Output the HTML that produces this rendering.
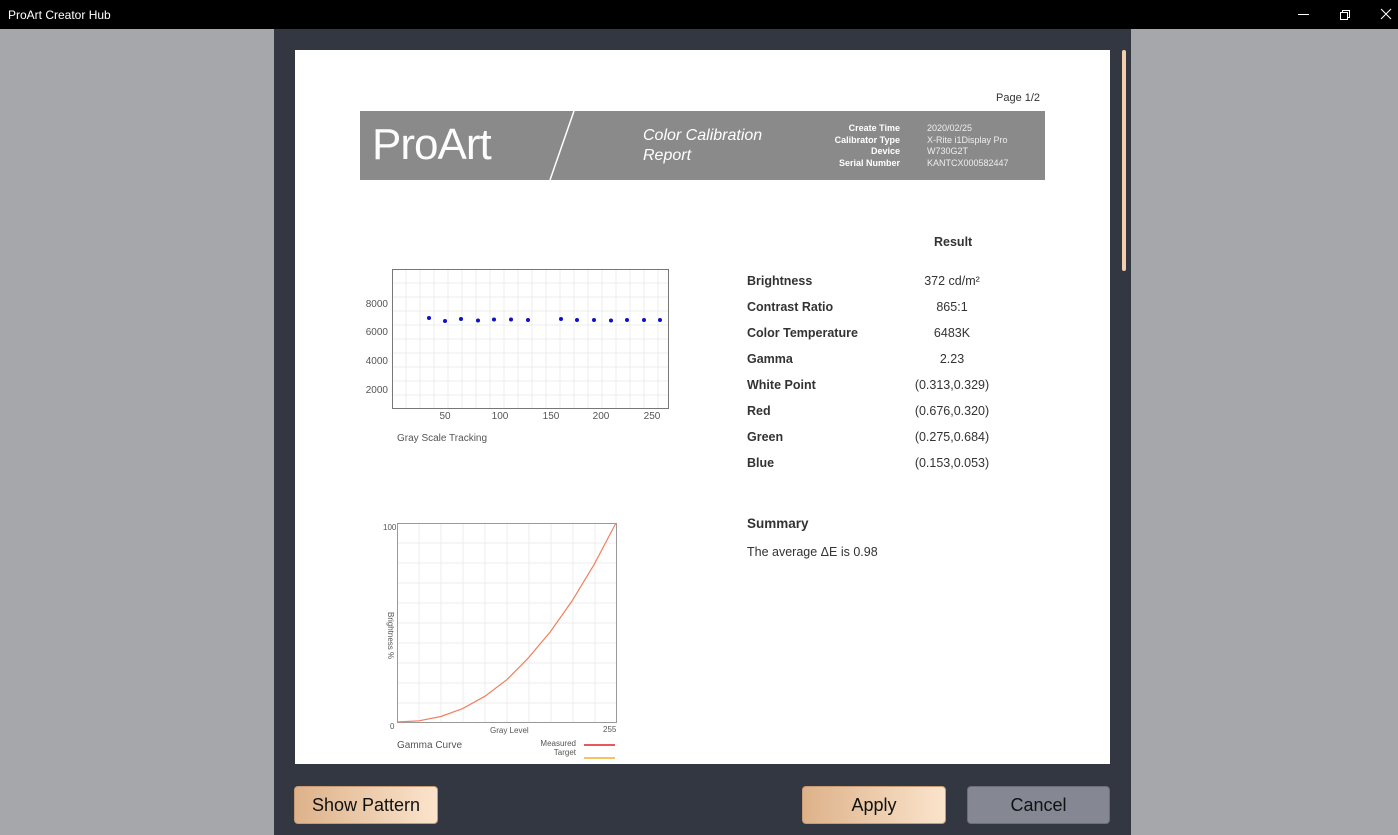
<!DOCTYPE html>
<html><head><meta charset="utf-8"><style>
*{margin:0;padding:0;box-sizing:border-box}
body{width:1398px;height:835px;overflow:hidden;background:#a6a7ab;font-family:"Liberation Sans",sans-serif;position:relative}
.abs{position:absolute}
.title{left:0;top:0;width:1398px;height:29px;background:#000;color:#fff;font-size:12px}
.panel{left:274px;top:29px;width:857px;height:806px;background:#323741}
.page{left:295px;top:50px;width:815px;height:714px;background:#fff;overflow:hidden}
.btn{height:38px;border-radius:4px;font-size:18px;color:#111;display:flex;align-items:center;justify-content:center}
.peach{background:linear-gradient(90deg,#ddb28a,#fbe4cc);border:1px solid #c99b72}
.lbl{font-size:12.5px;font-weight:bold;color:#333}
.val{font-size:12.5px;color:#333;text-align:center;width:140px}
</style></head><body>
<div class="abs title"><span class="abs" style="left:8px;top:8px">ProArt Creator Hub</span>
<svg class="abs" style="left:1290px;top:6px" width="108" height="18"><line x1="8" y1="8.5" x2="19" y2="8.5" stroke="#fff"/><rect x="50.5" y="6.5" width="7" height="7" fill="none" stroke="#fff"/><path d="M52.5 6.5V4.5H59.5V11.5H57.5" fill="none" stroke="#fff"/><path d="M91 3L101 13M101 3L91 13" stroke="#fff"/></svg></div>
<div class="abs panel"></div>
<div class="abs" style="left:1122px;top:50px;width:4px;height:221px;background:#f3cfae;border-radius:2px"></div>
<div class="abs page"></div>
<div class="abs" style="left:996px;top:92px;font-size:11px;color:#333">Page 1/2</div>
<div class="abs" style="left:360px;top:111px;width:685px;height:69px;background:#8a8a8a;color:#fff;overflow:hidden">
<svg class="abs" style="left:0;top:0" width="685" height="69"><line x1="214" y1="0" x2="190" y2="69" stroke="#fff" stroke-width="1.5"/></svg>
<div class="abs" style="left:12px;top:9px;font-size:44px;letter-spacing:-1px;font-weight:300;color:#fdfdfd">ProArt</div>
<div class="abs" style="left:283px;top:15px;font-size:16px;font-style:italic;line-height:20px">Color Calibration<br>Report</div>
<div class="abs" style="left:440px;top:12px;width:100px;text-align:right;font-size:9px;font-weight:bold;line-height:11.5px">Create Time<br>Calibrator Type<br>Device<br>Serial Number</div>
<div class="abs" style="left:567px;top:12px;font-size:9px;line-height:11.5px;color:#eee">2020/02/25<br>X-Rite i1Display Pro<br>W730G2T<br>KANTCX000582447</div>
</div>
<svg class="abs" style="left:0;top:0" width="1110" height="764" font-family="Liberation Sans" fill="#555">
<g stroke="#ececec" stroke-width="1">
<path d="M406 269V408M420 269V408M434 269V408M448 269V408M462 269V408M476 269V408M490 269V408M504 269V408M518 269V408M532 269V408M546 269V408M560 269V408M574 269V408M588 269V408M602 269V408M616 269V408M630 269V408M644 269V408M658 269V408"/>
<path d="M392 283H668M392 297H668M392 311H668M392 325H668M392 339H668M392 353H668M392 367H668M392 381H668M392 395H668"/>
<path d="M419 523V722M441 523V722M463 523V722M485 523V722M507 523V722M529 523V722M551 523V722M573 523V722M595 523V722"/>
<path d="M397 543H616M397 563H616M397 583H616M397 603H616M397 623H616M397 643H616M397 663H616M397 683H616M397 703H616"/>
</g>
<rect x="392.5" y="269.5" width="276" height="139" fill="none" stroke="#777"/>
<rect x="397.5" y="523.5" width="219" height="199" fill="none" stroke="#999"/>
<g fill="#1010c8"><circle cx="429" cy="318" r="2"/><circle cx="445" cy="321" r="2"/><circle cx="461" cy="319" r="2"/><circle cx="478" cy="320.5" r="2"/><circle cx="494" cy="319.5" r="2"/><circle cx="511" cy="319.5" r="2"/><circle cx="528" cy="320" r="2"/><circle cx="561" cy="319" r="2"/><circle cx="577" cy="320" r="2"/><circle cx="594" cy="320" r="2"/><circle cx="611" cy="320.5" r="2"/><circle cx="627" cy="320" r="2"/><circle cx="644" cy="320" r="2"/><circle cx="660" cy="320" r="2"/></g>
<g font-size="10" text-anchor="end"><text x="388" y="307">8000</text><text x="388" y="335">6000</text><text x="388" y="364">4000</text><text x="388" y="393">2000</text></g>
<g font-size="10" text-anchor="middle"><text x="445" y="419">50</text><text x="500" y="419">100</text><text x="551" y="419">150</text><text x="601" y="419">200</text><text x="652" y="419">250</text></g>
<text x="397" y="441" font-size="10">Gray Scale Tracking</text>
<path d="M397 722L419 720.8L441 716.5L463 708.4L485 696.2L507 679.6L528 658.3L550 632.2L572 601L594 564.7L616 523" fill="none" stroke="#f08060" stroke-width="1.2"/>
<g font-size="8"><text x="383" y="530">100</text><text x="390" y="729">0</text><text x="490" y="733">Gray Level</text><text x="603" y="732">255</text>
<text x="0" y="0" transform="translate(388,612) rotate(90)">Brightness %</text>
<text x="576" y="746" text-anchor="end">Measured</text><text x="576" y="755" text-anchor="end">Target</text></g>
<text x="397" y="748" font-size="10">Gamma Curve</text>
<line x1="584" y1="745" x2="615" y2="745" stroke="#e02020" stroke-width="1.5"/>
<line x1="584" y1="758" x2="615" y2="758" stroke="#f0b030" stroke-width="1.5"/>
</svg>
<div class="abs lbl" style="left:934px;top:235px">Result</div>
<div class="abs lbl" style="left:747px;top:268px;line-height:26px">Brightness<br>Contrast Ratio<br>Color Temperature<br>Gamma<br>White Point<br>Red<br>Green<br>Blue</div>
<div class="abs val" style="left:882px;top:268px;line-height:26px">372 cd/m²<br>865:1<br>6483K<br>2.23<br>(0.313,0.329)<br>(0.676,0.320)<br>(0.275,0.684)<br>(0.153,0.053)</div>
<div class="abs" style="left:747px;top:516px;font-size:13.5px;font-weight:bold;color:#333">Summary</div>
<div class="abs" style="left:747px;top:545px;font-size:12.5px;color:#333">The average ΔE is 0.98</div>
<div class="abs btn peach" style="left:294px;top:786px;width:144px">Show Pattern</div>
<div class="abs btn peach" style="left:802px;top:786px;width:144px">Apply</div>
<div class="abs btn" style="left:967px;top:786px;width:143px;background:#858893;border:1px solid #6c6f78">Cancel</div>
</body></html>
